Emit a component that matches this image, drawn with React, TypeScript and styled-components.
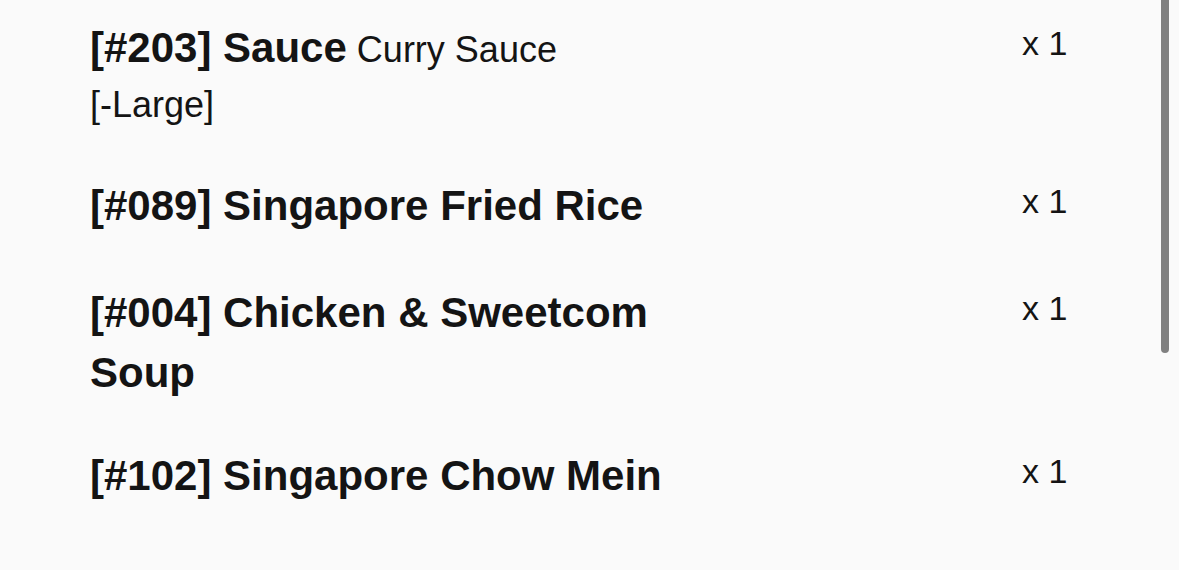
import React from "react";
import styled, { createGlobalStyle } from "styled-components";

const GlobalStyle = createGlobalStyle`
  html, body {
    margin: 0;
    padding: 0;
    background: #fafafa;
  }
  body {
    font-family: "Liberation Sans", Arial, Helvetica, sans-serif;
    color: #141414;
  }
`;

const Viewport = styled.div`
  position: relative;
  height: 570px;
  overflow: hidden;
  background: #fafafa;
`;

const List = styled.ul`
  list-style: none;
  margin: 0;
  padding: 18px 97px 0 90px;
`;

const Row = styled.li<{ $gap: number }>`
  display: flex;
  align-items: flex-start;
  justify-content: space-between;
  margin-bottom: ${(p) => p.$gap}px;
`;

const Name = styled.div`
  max-width: 640px;
`;

const Title = styled.div`
  font-size: 42px;
  line-height: 60px;
  font-weight: 700;
`;

const Sub = styled.span`
  font-size: 36px;
  font-weight: 400;
`;

const Modifier = styled.div`
  font-size: 36px;
  line-height: 44px;
  margin-top: 3px;
`;

const Qty = styled.div`
  font-size: 34px;
  line-height: 51px;
  width: 60px;
  white-space: nowrap;
`;

const ScrollThumb = styled.div`
  position: absolute;
  top: 0;
  right: 10px;
  width: 8px;
  height: 353px;
  border-radius: 0 0 4px 4px;
  background: #808080;
`;

type Item = { code: string; name: string; sub?: string; mods?: string[]; qty: number; gap: number };

const items: Item[] = [
  { code: "203", name: "Sauce", sub: "Curry Sauce", mods: ["[-Large]"], qty: 1, gap: 49 },
  { code: "089", name: "Singapore Fried Rice", qty: 1, gap: 47 },
  { code: "004", name: "Chicken & Sweetcom Soup", qty: 1, gap: 43 },
  { code: "102", name: "Singapore Chow Mein", qty: 1, gap: 40 },
];

export default function App() {
  return (
    <Viewport>
      <GlobalStyle />
      <List>
        {items.map((it) => (
          <Row key={it.code} $gap={it.gap}>
            <Name>
              <Title>
                [#{it.code}] {it.name}
                {it.sub && <Sub> {it.sub}</Sub>}
              </Title>
              {it.mods?.map((m) => <Modifier key={m}>{m}</Modifier>)}
            </Name>
            <Qty>x {it.qty}</Qty>
          </Row>
        ))}
      </List>
      <ScrollThumb />
    </Viewport>
  );
}
